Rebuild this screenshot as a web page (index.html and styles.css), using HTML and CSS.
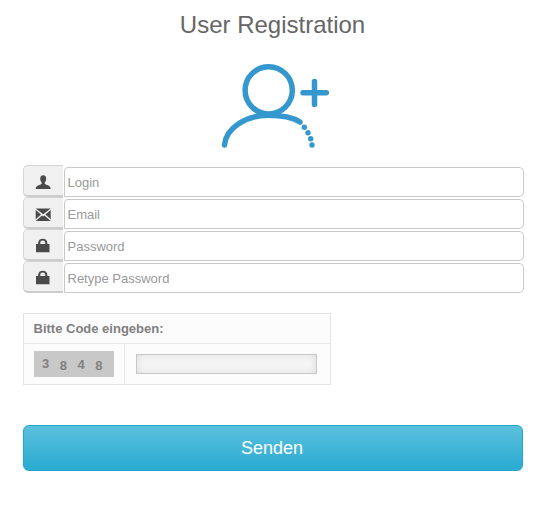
FILE: index.html
```html
<!DOCTYPE html>
<html lang="de">
<head>
  <meta charset="UTF-8" />
  <title>User Registration</title>
  <link rel="stylesheet" href="styles.css">
</head>
<body>
  <h1>User Registration</h1>

  <div class="logo">
    <svg width="120" height="95" viewBox="210 60 120 95">
      <g fill="none" stroke="#3498cf" stroke-width="5.500" stroke-linecap="round">
        <circle cx="268.700" cy="90.300" r="23.600"/>
        <path d="M224.500 145C226 128 246 115.300 268 115.300C280 115.300 292 117 300 122"/>
        <path d="M303 92.700H326.300M314.500 81.500V104.500"/>
      </g>
      <g fill="#3498cf">
        <circle cx="304.300" cy="127.300" r="2.700"/>
        <circle cx="308" cy="132.700" r="2.700"/>
        <circle cx="310.700" cy="138.700" r="2.700"/>
        <circle cx="312" cy="145" r="2.700"/>
      </g>
    </svg>
  </div>

  <form class="fields">
    <div class="row">
      <span class="addon">
        <svg class="icon" viewBox="0 0 16 16"><path d="M8.200 2.300C6 2.300 5.200 4 5.200 5.800C5.200 7.600 6.100 8.800 6.600 9.600V11C5.200 11.900 0.700 12.300 0.700 16H15.700C15.700 12.300 11.200 11.900 9.800 11V9.600C10.300 8.800 11.200 7.600 11.200 5.800C11.200 4 10.400 2.300 8.200 2.300Z"/></svg>
      </span>
      <input class="field" type="text" placeholder="Login">
    </div>
    <div class="row">
      <span class="addon">
        <svg class="icon" viewBox="0 0 16 16"><path d="M0.700 3.500H15.700L8.200 9.300ZM0.700 5V14.300L6 9.600ZM15.700 5V14.300L10.400 9.600ZM0.700 16L7 10.500L8.200 11.500L9.400 10.500L15.700 16Z"/></svg>
      </span>
      <input class="field" type="text" placeholder="Email">
    </div>
    <div class="row">
      <span class="addon">
        <svg class="icon" viewBox="0 0 16 16"><path d="M3.200 7V5.500C3.200 3 5.300 1.700 7.750 1.700C10.200 1.700 12.300 3 12.300 5.500V7H14.500V15.300H1V7ZM5.300 7H10.200V5.500C10.200 4.200 9.200 3.500 7.750 3.500C6.300 3.500 5.300 4.200 5.300 5.500Z"/></svg>
      </span>
      <input class="field" type="password" placeholder="Password">
    </div>
    <div class="row">
      <span class="addon">
        <svg class="icon" viewBox="0 0 16 16"><path d="M3.200 7V5.500C3.200 3 5.300 1.700 7.750 1.700C10.200 1.700 12.300 3 12.300 5.500V7H14.500V15.300H1V7ZM5.300 7H10.200V5.500C10.200 4.200 9.200 3.500 7.750 3.500C6.300 3.500 5.300 4.200 5.300 5.500Z"/></svg>
      </span>
      <input class="field" type="password" placeholder="Retype Password">
    </div>

    <div class="captcha">
      <div class="captcha-title">Bitte Code eingeben:</div>
      <div class="captcha-body">
        <div class="captcha-left">
          <div class="code">
            <span class="up">3</span>
            <span class="down">8</span>
            <span>4</span>
            <span class="down">8</span>
          </div>
        </div>
        <div class="captcha-right">
          <input class="code-input" type="text">
        </div>
      </div>
    </div>

    <button class="send" type="button">Senden</button>
  </form>
</body>
</html>
```

FILE: styles.css
```css
body {
  font-family: 'Liberation Sans', Arial, sans-serif;
  margin: 0;
  padding: 0 25px 0 23px;
  background: white;
  color: #666;
}

h1 {
  margin: 0;
  padding: 11px 2px 0 0;
  height: 49px;
  box-sizing: border-box;
  text-align: center;
  font-size: 24px;
  line-height: 28px;
  font-weight: normal;
  color: #666;
}

.logo {
  display: flex;
  justify-content: center;
  height: 95px;
  margin-top: 11px;
  padding-right: 8px;
  margin-bottom: 10px;
}

.row {
  display: flex;
  height: 32px;
}

.addon {
  box-sizing: border-box;
  width: 40px;
  height: 32px;
  padding-right: 1px;
  display: flex;
  align-items: center;
  justify-content: center;
  background: #f0f0f0;
  border: 1px solid #d4d4d4;
  border-right: none;
  border-bottom: 2px solid #ccc;
  border-radius: 5px 0 0 5px;
}

.icon {
  width: 16px;
  height: 16px;
  fill: #4a4a4a;
}

.field {
  box-sizing: border-box;
  width: 460px;
  height: 30px;
  margin: 2px 0 0 1px;
  padding: 0 2.500px;
  font-family: inherit;
  font-size: 13px;
  color: #666;
  background: white;
  border: 1px solid #c8c8c8;
  border-radius: 4px 5px 5px 0;
  outline: none;
}

.field::placeholder {
  color: #999;
  opacity: 1;
}

.captcha {
  box-sizing: border-box;
  width: 308px;
  height: 72px;
  margin-top: 20px;
  background: #fcfcfc;
  border: 1px solid #e4e4e4;
}

.captcha-title {
  box-sizing: border-box;
  height: 30px;
  padding-left: 9.500px;
  font-size: 13px;
  line-height: 29px;
  font-weight: bold;
  color: #808080;
  border-bottom: 1px solid #e8e8e8;
}

.captcha-body {
  display: flex;
  height: 40px;
}

.captcha-left {
  box-sizing: border-box;
  width: 101px;
  padding: 7px 10px;
  border-right: 1px solid #e8e8e8;
}

.code {
  display: flex;
  gap: 10.500px;
  align-items: center;
  width: 80px;
  height: 26px;
  padding-left: 8px;
  box-sizing: border-box;
  background: #c8c8c8;
  font-size: 13px;
  font-weight: bold;
  color: #808080;
}

.up {
  margin-bottom: 2px;
}

.down {
  margin-top: 3px;
}

.captcha-right {
  padding: 10px 0 0 11px;
}

.code-input {
  display: block;
  box-sizing: border-box;
  width: 181px;
  height: 20px;
  margin: 0;
  background: #f6f6f6;
  border: 1px solid #c8c8c8;
  box-shadow: inset 0 0 10px rgba(0, 0, 0, 0.1);
  outline: none;
}

.send {
  display: block;
  width: 500px;
  height: 46px;
  margin-top: 40px;
  padding: 0 2px 0 0;
  font-family: inherit;
  font-size: 18px;
  color: white;
  background: linear-gradient(to bottom, #5bc0de, #2aabd2);
  border: 1px solid #28a4c9;
  border-radius: 6px;
  box-shadow: 0 1px 2px rgba(0, 0, 0, 0.1);
  cursor: pointer;
}
```
